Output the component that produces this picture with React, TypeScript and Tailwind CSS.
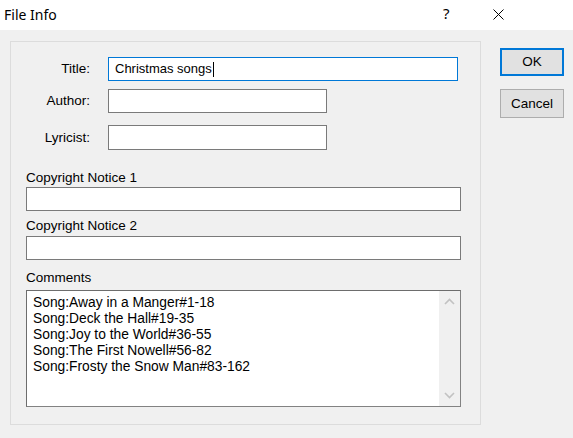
import React from 'react';

const songs = [
  'Song:Away in a Manger#1-18',
  'Song:Deck the Hall#19-35',
  'Song:Joy to the World#36-55',
  'Song:The First Nowell#56-82',
  'Song:Frosty the Snow Man#83-162',
];

function Field({ label, width, focused, value, height = 'h-[24px]' }: { label: string; width: string; focused?: boolean; value?: string; height?: string }) {
  return (
    <div className="flex items-center">
      <div className="w-[80px] text-right pr-[1px] text-[13.5px]">{label}</div>
      <div
        className={`ml-[17px] ${width} ${height} bg-white flex items-center pl-[6px] border ${focused ? 'border-[#0078d7]' : 'border-[#7a7a7a]'}`}
      >
        {value}
        {focused && <span className="inline-block w-[1px] h-[15px] bg-black ml-[1px]" />}
      </div>
    </div>
  );
}

export default function App() {
  return (
    <div className="w-[573px] h-[438px] bg-[#f0f0f0] text-black text-[13px] leading-[16px] overflow-hidden" style={{ fontFamily: '"Liberation Sans", Arial, sans-serif' }}>
      {/* title bar */}
      <div className="h-[30px] bg-white flex items-center relative">
        <span className="ml-[4px] text-[14px]" style={{ fontFamily: '"Noto Sans", "Open Sans", sans-serif' }}>File Info</span>
        <span className="absolute left-[443px] top-[5px] text-[15px]" style={{ fontFamily: '"Noto Sans", sans-serif' }}>?</span>
        <svg className="absolute left-[493px] top-[9px]" width="11" height="11" viewBox="0 0 11 11">
          <path d="M0.5 0.5 L10.5 10.5 M10.5 0.5 L0.5 10.5" stroke="#000" strokeWidth="1" />
        </svg>
      </div>

      <div className="flex">
        {/* group panel */}
        <div className="ml-[10px] mt-[11px] w-[471px] h-[384px] border border-[#dcdcdc] pt-[15px] flex flex-col">
          <Field label="Title:" width="w-[350px]" focused value="Christmas songs" />
          <div className="mt-[8px]">
            <Field label="Author:" width="w-[219px]" />
          </div>
          <div className="mt-[12px]">
            <Field label="Lyricist:" width="w-[219px]" height="h-[25px]" />
          </div>

          <div className="ml-[15px] w-[435px] text-[13.5px]">
            <div className="mt-[20px]">Copyright Notice 1</div>
            <div className="mt-[1px] h-[24px] bg-white border border-[#7a7a7a]" />
            <div className="mt-[7px]">Copyright Notice 2</div>
            <div className="mt-[2px] h-[24px] bg-white border border-[#7a7a7a]" />
            <div className="mt-[10px]">Comments</div>
            <div className="mt-[4px] h-[117px] bg-white border border-[#828282] border-t-[#6d6d6d] border-l-[#6d6d6d] flex">
              <div className="flex-1 pl-[6px] pt-[4px] text-[13.8px]">
                {songs.map((s) => (
                  <div key={s}>{s}</div>
                ))}
              </div>
              <div className="w-[21px] bg-[#f0f0f0] flex flex-col justify-between items-center py-[7px]">
                <svg width="11" height="7" viewBox="0 0 11 7">
                  <path d="M1 6 L5.5 1.5 L10 6" fill="none" stroke="#c2c2c2" strokeWidth="1.6" />
                </svg>
                <svg width="11" height="7" viewBox="0 0 11 7">
                  <path d="M1 1 L5.5 5.5 L10 1" fill="none" stroke="#c2c2c2" strokeWidth="1.6" />
                </svg>
              </div>
            </div>
          </div>
        </div>

        {/* buttons */}
        <div className="ml-[19px] mt-[18px] flex flex-col gap-[13px]">
          <button className="w-[64px] h-[28px] bg-[#e1e1e1] border-2 border-[#0078d7] text-[13.5px]">OK</button>
          <button className="w-[64px] h-[29px] bg-[#e1e1e1] border border-[#adadad] text-[13.5px]">Cancel</button>
        </div>
      </div>
    </div>
  );
}
